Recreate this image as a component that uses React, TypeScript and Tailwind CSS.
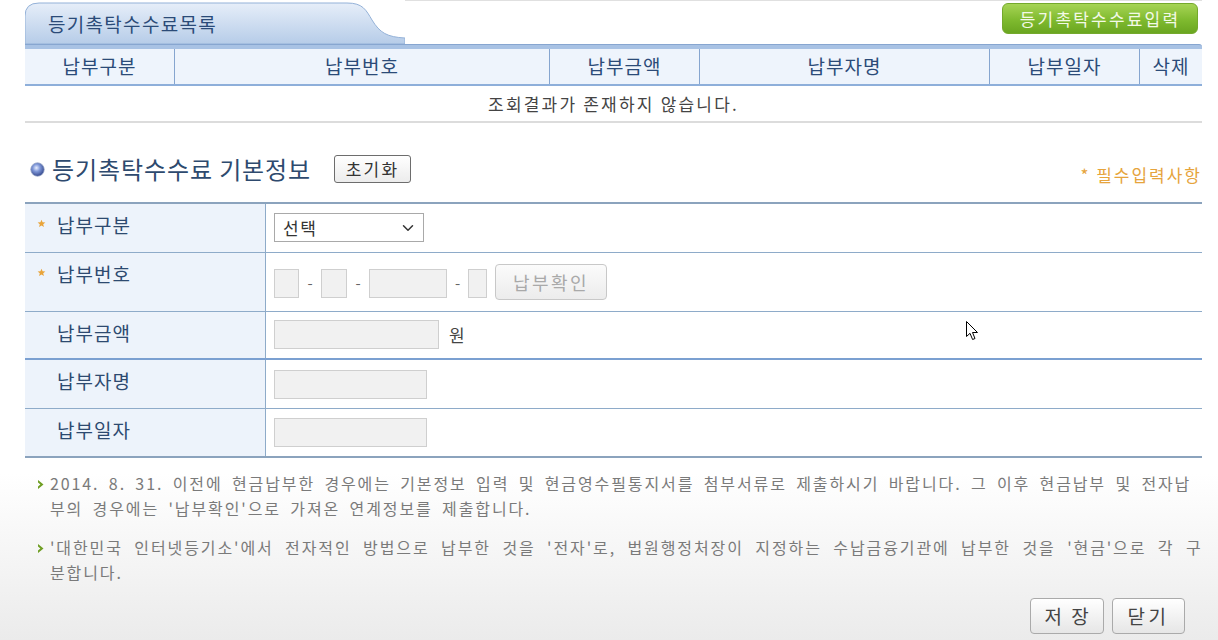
import { ChevronDown } from "lucide-react";

const Star = () => (
  <svg width="9" height="9" viewBox="0 0 10 10" className="shrink-0">
    <path d="M5 0.8 L6.2 3.6 L9.3 3.8 L6.9 5.8 L7.7 8.9 L5 7.2 L2.3 8.9 L3.1 5.8 L0.7 3.8 L3.8 3.6 Z" fill="#e9a43a" />
  </svg>
);

const Chevron = () => (
  <svg width="8" height="11" viewBox="0 0 8 11" className="shrink-0">
    <path d="M1 1 L6.5 5.5 L1 10 L1 7.4 L3.4 5.5 L1 3.6 Z" fill="#6f9e23" />
  </svg>
);

const Field = ({ w }: { w: string }) => (
  <div className={`h-[29px] ${w} border border-[#cfcfcf] bg-[#f1f1f1]`} />
);

const Row = ({
  label,
  req,
  h,
  bottom,
  children,
}: {
  label: string;
  req?: boolean;
  h: string;
  bottom: string;
  children: React.ReactNode;
}) => (
  <div className={`flex ${h} ${bottom}`}>
    <div className="w-[241px] shrink-0 bg-[#edf3fb] border-r border-[#8eabc9] flex items-start pt-[7px]">
      <div className="w-[24px] shrink-0 flex justify-end pr-[3px] pt-[8px]">{req ? <Star /> : null}</div>
      <span className="ml-[8px] text-[19px] tracking-[1px] leading-[28px] text-[#2d4a70]">{label}</span>
    </div>
    <div className="flex-1 pl-[8px]">{children}</div>
  </div>
);

export default function App() {
  return (
    <div className="relative w-[1218px] h-[640px] overflow-hidden font-['Noto_Sans_CJK_KR','Noto_Sans',sans-serif] bg-[linear-gradient(to_bottom,#ffffff_0%,#ffffff_74%,#ebebeb_100%)]">
      {/* top list section */}
      <div className="flex h-[44px] pl-[25px] pr-[16px]">
        <div className="relative w-[380px] h-[42px] mt-[2px]">
          <svg className="absolute inset-0" width="380" height="42" viewBox="0 0 380 42">
            <defs>
              <linearGradient id="tabg" x1="0" y1="0" x2="0" y2="1">
                <stop offset="0" stopColor="#e6eef9" />
                <stop offset="1" stopColor="#b6cce8" />
              </linearGradient>
            </defs>
            <path
              d="M0,42 V14 Q0,1 14,1 H322 C338,1 341,8 347,18 C355,31 362,35 380,36 V42 Z"
              fill="url(#tabg)"
              stroke="#93b1d8"
              strokeWidth="1"
            />
          </svg>
          <div className="relative pl-[23px] pt-[8px] text-[19px] tracking-[1.3px] leading-[28px] text-[#2b4b78]">
            등기촉탁수수료목록
          </div>
        </div>
        <div className="flex-1 border-t border-[#e0e0e0] flex justify-end items-start pt-[2px]">
          <div className="mr-[4px] w-[196px] h-[31px] rounded-[6px] border border-[#74a92c] bg-[linear-gradient(to_bottom,#a6d455,#7fba2f_55%,#6aa620)] flex items-center justify-center text-[17px] tracking-[2.2px] text-[#f3f9e6]">
            등기촉탁수수료입력
          </div>
        </div>
      </div>
      <div className="ml-[25px] mr-[16px]">
        <div className="h-[5px] bg-[#a8c2e4] border-t border-[#87a6d0] rounded-tr-[3px]" />
        <div className="grid grid-cols-[150px_375px_150px_290px_150px_62px] h-[37px] bg-[#eef4fc] border-b-2 border-[#8eafda] text-[19px] tracking-[1px] text-[#2b4b78]">
          <div className="flex items-center justify-center border-r border-[#86a5cf]">납부구분</div>
          <div className="flex items-center justify-center border-r border-[#86a5cf]">납부번호</div>
          <div className="flex items-center justify-center border-r border-[#86a5cf]">납부금액</div>
          <div className="flex items-center justify-center border-r border-[#86a5cf]">납부자명</div>
          <div className="flex items-center justify-center border-r border-[#86a5cf]">납부일자</div>
          <div className="flex items-center justify-center">삭제</div>
        </div>
        <div className="h-[37px] border-b-2 border-[#dcdcdc] flex items-center justify-center text-[17px] tracking-[2.2px] text-[#444]">
          조회결과가 존재하지 않습니다.
        </div>
      </div>

      {/* basic info section */}
      <div className="mt-[30px] flex items-end pl-[30px] pr-[16px] h-[38px]">
        <div className="flex items-center self-start mt-[1px]">
          <svg width="15" height="15" viewBox="0 0 16 16" className="shrink-0">
            <defs>
              <radialGradient id="ball" cx="0.42" cy="0.38" r="0.6">
                <stop offset="0" stopColor="#e9efff" />
                <stop offset="0.45" stopColor="#7f97d8" />
                <stop offset="1" stopColor="#3b4f93" />
              </radialGradient>
            </defs>
            <circle cx="8" cy="8" r="7.2" fill="url(#ball)" stroke="#9aa8c8" strokeWidth="0.8" />
          </svg>
          <span className="ml-[7px] text-[24px] tracking-[0.9px] leading-[30px] text-[#2e4a6e]">등기촉탁수수료 기본정보</span>
          <div className="ml-[23px] w-[77px] h-[28px] border border-[#6d6d6d] rounded-[3px] bg-[linear-gradient(to_bottom,#ffffff,#ececec)] flex items-center justify-center text-[17px] tracking-[2.3px] text-[#333]">
            초기화
          </div>
        </div>
        <div className="ml-auto text-[17px] tracking-[2px] leading-[22px] text-[#e6a43c] pb-[5px]">* 필수입력사항</div>
      </div>

      <div className="mt-[11px] ml-[25px] mr-[16px] border-t-2 border-[#8ba3bd]">
        <Row label="납부구분" req h="h-[49px]" bottom="border-b border-[#8eabc9]">
          <div className="mt-[9px] w-[150px] h-[29px] border border-[#a9a9a9] bg-white flex items-center justify-between pl-[8px] pr-[6px] text-[17px] tracking-[1.5px] text-[#333]">
            <span>선택</span>
            <ChevronDown size={18} strokeWidth={2} color="#333" />
          </div>
        </Row>
        <Row label="납부번호" req h="h-[59px]" bottom="border-b border-[#8eabc9]">
          <div className="flex items-start">
            <div className="mt-[16px] flex items-center">
              <Field w="w-[25px]" />
              <span className="w-[22px] text-center text-[#666] text-[15px]">-</span>
              <Field w="w-[26px]" />
              <span className="w-[22px] text-center text-[#666] text-[15px]">-</span>
              <Field w="w-[78px]" />
              <span className="w-[21px] text-center text-[#666] text-[15px]">-</span>
              <Field w="w-[19px]" />
            </div>
            <div className="ml-[8px] mt-[11px] w-[112px] h-[36px] rounded-[4px] border border-[#c8c8c8] bg-[linear-gradient(to_bottom,#fbfbfb,#ececec)] flex items-center justify-center text-[18px] tracking-[2.5px] text-[#a9a9a9]">
              납부확인
            </div>
          </div>
        </Row>
        <Row label="납부금액" h="h-[48px]" bottom="border-b-2 border-[#7ba0d1]">
          <div className="mt-[8px] flex items-center">
            <Field w="w-[165px]" />
            <span className="ml-[10px] text-[17px] text-[#444]">원</span>
          </div>
        </Row>
        <Row label="납부자명" h="h-[49px]" bottom="border-b border-[#8eabc9]">
          <div className="mt-[10px]">
            <Field w="w-[153px]" />
          </div>
        </Row>
        <Row label="납부일자" h="h-[49px]" bottom="border-b-2 border-[#8ba3bd]">
          <div className="mt-[9px]">
            <Field w="w-[153px]" />
          </div>
        </Row>
      </div>

      {/* notes */}
      <div className="mt-[13px] ml-[37px] mr-[10px] flex flex-col gap-[14px] text-[16px] leading-[25px] tracking-[1.9px] text-[#7a7a7a]">
        <div className="flex items-start">
          <div className="pt-[8px] w-[13px] shrink-0">
            <Chevron />
          </div>
          <p className="whitespace-nowrap [word-spacing:3.9px]">
            2014. 8. 31. 이전에 현금납부한 경우에는 기본정보 입력 및 현금영수필통지서를 첨부서류로 제출하시기 바랍니다. 그 이후 현금납부 및 전자납
            <br />
            부의 경우에는 '납부확인'으로 가져온 연계정보를 제출합니다.
          </p>
        </div>
        <div className="flex items-start">
          <div className="pt-[8px] w-[13px] shrink-0">
            <Chevron />
          </div>
          <p className="whitespace-nowrap [word-spacing:6px]">
            '대한민국 인터넷등기소'에서 전자적인 방법으로 납부한 것을 '전자'로, 법원행정처장이 지정하는 수납금융기관에 납부한 것을 '현금'으로 각 구
            <br />
            분합니다.
          </p>
        </div>
      </div>

      <div className="absolute left-0 right-0 top-[598px] flex justify-end gap-[8px] pr-[33px]">
        <div className="w-[74px] h-[36px] rounded-[4px] border border-[#aaaaaa] bg-[linear-gradient(to_bottom,#ffffff,#e6e6e6)] flex items-center justify-center text-[19px] tracking-[1px] text-[#444] [word-spacing:3px]">
          저 장
        </div>
        <div className="w-[73px] h-[36px] rounded-[4px] border border-[#aaaaaa] bg-[linear-gradient(to_bottom,#ffffff,#e6e6e6)] flex items-center justify-center text-[19px] tracking-[3.5px] text-[#444]">
          닫기
        </div>
      </div>

      {/* mouse cursor */}
      <svg className="absolute left-[966px] top-[321px]" width="13" height="20" viewBox="0 0 13 20">
        <path d="M0.5 0.5 L0.5 15.5 L4 12.3 L6.6 18.5 L9 17.5 L6.5 11.5 L11.5 11.5 Z" fill="#ffffff" stroke="#000000" strokeWidth="1" strokeLinejoin="round" />
      </svg>
    </div>
  );
}
